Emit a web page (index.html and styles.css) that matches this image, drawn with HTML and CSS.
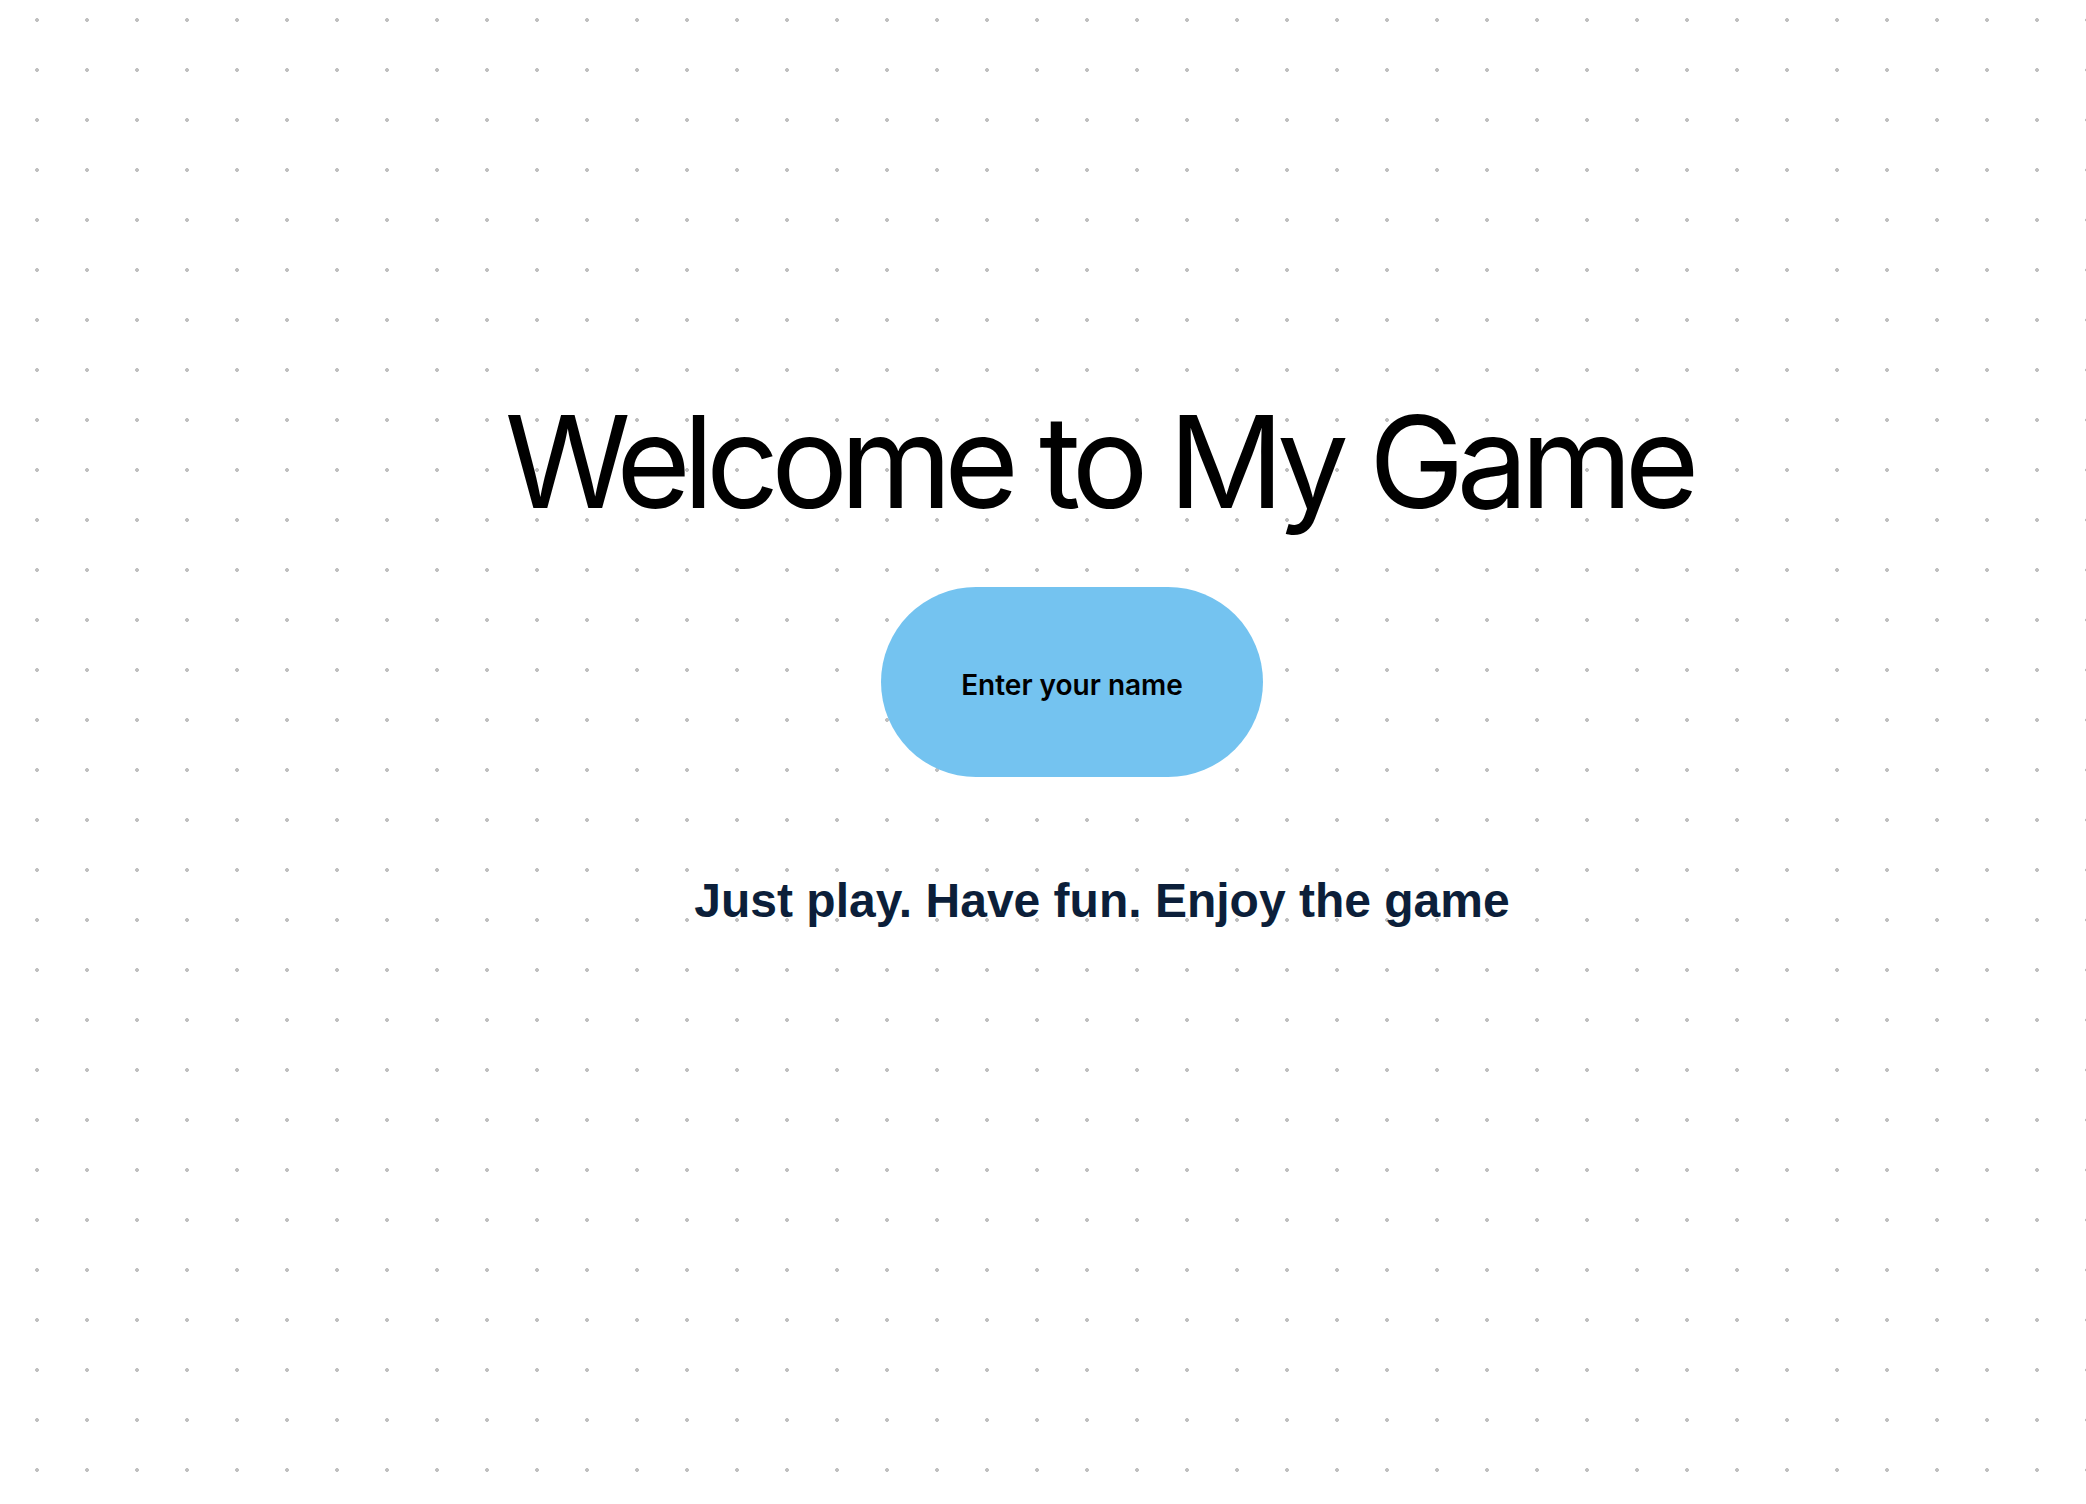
FILE: index.html
```html
<!DOCTYPE html>
<html lang="en">
<head>
<meta charset="utf-8">
<title>Welcome to My Game</title>
<link rel="stylesheet" href="styles.css">
</head>
<body>
<main class="hero">
  <h1 class="title">Welcome to My Game</h1>
  <button class="name-btn" type="button">Enter your name</button>
  <p class="tagline">Just play. Have fun. Enjoy the game</p>
</main>
</body>
</html>
```
FILE: styles.css
```css
html, body {
  margin: 0;
  padding: 0;
}
body {
  min-height: 100vh;
  background-color: #ffffff;
  background-image: radial-gradient(circle, #c0c0c0 1.6px, rgba(192,192,192,0) 2.2px);
  background-size: 50px 50px;
  background-position: 12px -5px;
  font-family: "Inter", "Noto Sans", sans-serif;
}
.hero {
  display: flex;
  flex-direction: column;
  align-items: center;
  padding: 384px 0 0 110px;
}
.title {
  margin: 0;
  font-family: "Inter", sans-serif;
  font-weight: 400;
  font-size: 128px;
  line-height: 155px;
  color: #000000;
  letter-spacing: -0.062em;
  white-space: nowrap;
}
.name-btn {
  margin: 48px 52px 0 0;
  width: 382px;
  height: 190px;
  border: none;
  border-radius: 9999px;
  background: #74c3f0;
  color: #000000;
  font-family: "Inter", sans-serif;
  font-weight: 600;
  font-size: 28px;
  padding: 6px 0 0 0;
  cursor: pointer;
}
.tagline {
  margin: 96px 0 0 8px;
  font-family: "Liberation Sans", Arial, sans-serif;
  font-weight: 700;
  font-size: 48px;
  line-height: 55px;
  color: #0c1f3a;
  white-space: nowrap;
}
```
